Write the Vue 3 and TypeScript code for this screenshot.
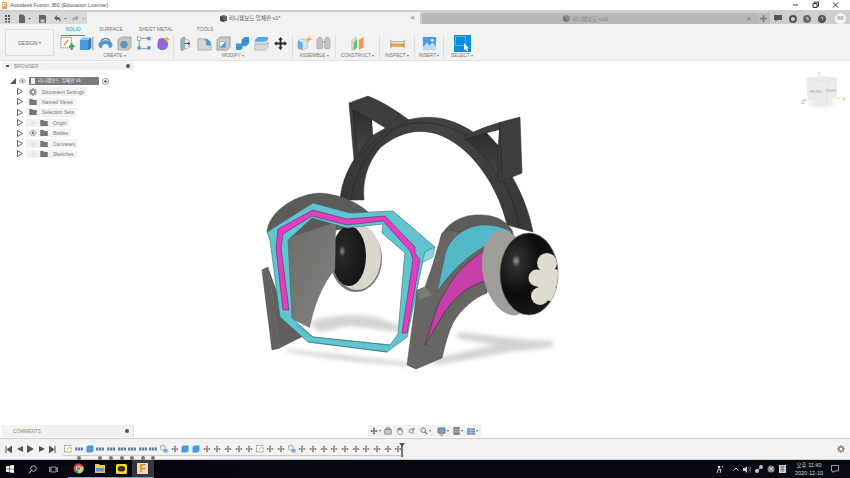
<script setup lang="ts">
const createIcons = ['sketch', 'box', 'revolve', 'hole', 'constraint', 'form']
const modifyIcons = ['press', 'fillet', 'shell', 'combine', 'split', 'move']
const rows = [
  { label: 'Document Settings', icon: 'gear', eye: '' },
  { label: 'Named Views', icon: 'folder', eye: '' },
  { label: 'Selection Sets', icon: 'folder', eye: '' },
  { label: 'Origin', icon: 'folder', eye: 'off' },
  { label: 'Bodies', icon: 'folder', eye: 'on' },
  { label: 'Canvases', icon: 'folder', eye: 'off' },
  { label: 'Sketches', icon: 'folder', eye: 'off' },
]
const kinds = 'sdbddddddlmbbmmmmmsmmlmmmmmmmmmm'.split('')
</script>

<template>
  <div class="app">
    <svg class="defs" width="0" height="0" aria-hidden="true">
      <defs>
        <symbol id="i-move" viewBox="0 0 16 16">
          <path d="M8 1 10.500 4H9v3h3V5.500L15 8l-3 2.500V9H9v3h1.500L8 15l-2.500-3H7V9H4v1.500L1 8l3-2.500V7h3V4H5.500z" fill="#2b2b2b" />
        </symbol>
        <symbol id="i-eye" viewBox="0 0 10 8">
          <path d="M.5 4C2 1.500 3.500 1 5 1s3 .5 4.500 3C8 6.500 6.500 7 5 7S2 6.500.5 4z" fill="none" stroke="currentColor" />
          <circle cx="5" cy="4" r="1.600" fill="currentColor" />
        </symbol>
        <symbol id="i-folder" viewBox="0 0 10 8">
          <path d="M0 0h4l1 1.200h5V8H0z" fill="#777" />
        </symbol>
        <symbol id="i-gear" viewBox="0 0 10 10">
          <circle cx="5" cy="5" r="2.700" fill="none" stroke="#777" stroke-width="1.600" />
          <path d="M5 0v2M5 8v2M0 5h2M8 5h2M1.500 1.500 3 3M7 7l1.500 1.500M8.500 1.500 7 3M3 7 1.500 8.500" stroke="#777" stroke-width="1.200" />
        </symbol>
      </defs>
    </svg>

    <header class="titlebar">
      <span class="f-logo">F</span>
      <span class="title-text">Autodesk Fusion 360 (Education License)</span>
      <div class="win-controls">
        <svg width="50" height="10" viewBox="0 0 50 10">
          <path d="M0 5h5" stroke="#333" />
          <path d="M20 3.500h4v4h-4zM21.500 3.500V2h4v4H24" fill="none" stroke="#333" />
          <path d="M40 2.500l5 5M45 2.500l-5 5" stroke="#333" />
        </svg>
      </div>
    </header>

    <div class="tabbar">
      <div class="quick">
        <svg width="84" height="11" viewBox="0 0 84 11">
          <path d="M4 2h2v2H4zM7 2h2v2H7zM4 5h2v2H4zM7 5h2v2H7zM4 8h2v1.500H4zM7 8h2v1.500H7z" fill="#555" />
          <path d="M18 1.500h4l2 2v6.500h-6z" fill="#666" />
          <path d="M27 5h3l-1.500 1.500z" fill="#666" />
          <path d="M38 2h6l1 1v7h-7z" fill="#666" />
          <rect x="39.500" y="6.500" width="4" height="3" fill="#ccc" />
          <path d="M53 5l3-3v2c3 0 4 2 3.500 5-1-2-2-2.500-3.500-2.500V8z" fill="#666" />
          <path d="M63 5h3l-1.500 1.500z" fill="#666" />
          <path d="M78 5l-3-3v2c-3 0-4 2-3.500 5 1-2 2-2.500 3.500-2.500V8z" fill="#aaa" />
          <path d="M81 5h3l-1.500 1.500z" fill="#aaa" />
        </svg>
      </div>
      <div class="tab active">
        <span class="tab-center">
          <svg class="doc-cube" width="7" height="7" viewBox="0 0 8 8"><path d="M4 0l4 1.500v5L4 8 0 6.500v-5z" fill="#666" /><path d="M4 3v5L0 6.500v-5z" fill="#444" /></svg>
          <span class="tab-label">리니잼보드 입체판 v1*</span>
        </span>
        <span class="tab-x">×</span>
      </div>
      <div class="tab inactive">
        <svg class="doc-cube" width="7" height="7" viewBox="0 0 8 8"><path d="M4 0l4 1.500v5L4 8 0 6.500v-5z" fill="#8a8a8a" /><path d="M4 3v5L0 6.500v-5z" fill="#777" /></svg>
        <span class="tab-label dim">리니잼보드 v10</span>
        <span class="tab-x right">×</span>
      </div>
      <div class="plus">
        <svg width="7" height="7" viewBox="0 0 7 7"><path d="M3.500 0v7M0 3.500h7" stroke="#777" stroke-width="1.400" /></svg>
      </div>
      <div class="tab-tools">
        <svg width="8" height="7" viewBox="0 0 8 7"><path d="M0 0h8v5H3L1.500 7V5H0z" fill="#555" /></svg>
        <svg width="8" height="8" viewBox="0 0 8 8"><circle cx="4" cy="4" r="3" fill="none" stroke="#555" stroke-width="2" /><path d="M4 0l3 1-2 2z" fill="#555" /></svg>
        <svg width="8" height="8" viewBox="0 0 8 8"><circle cx="4" cy="4" r="4" fill="#666" /><path d="M4 2v2h2" stroke="#ddd" fill="none" /></svg>
        <svg width="8" height="8" viewBox="0 0 8 8"><circle cx="4" cy="4" r="4" fill="#555" /><path d="M3 3c0-1 2-1 2 0 0 1-1 1-1 2" stroke="#ddd" fill="none" stroke-width=".8" /></svg>
        <span class="avatar">KK</span>
      </div>
    </div>

    <section class="ribbon">
      <button class="design">DESIGN <i class="caret"></i></button>
      <div class="ribbon-main">
        <nav class="ribbon-tabs">
          <span class="rtab on">SOLID</span>
          <span class="rtab">SURFACE</span>
          <span class="rtab wide">SHEET METAL</span>
          <span class="rtab">TOOLS</span>
        </nav>
        <div class="groups">
          <div class="group g-create">
            <div class="icons">
              <svg v-for="n in createIcons" :key="n" class="ti" viewBox="0 0 16 16">
                <template v-if="n === 'sketch'">
                  <rect x="1" y="1.500" width="11" height="11" fill="#fff" stroke="#777" stroke-dasharray="1.500 .8" />
                  <path d="M4 10 9 4" stroke="#d98c3b" stroke-width="1.400" />
                  <path d="M9.500 11h6M12.500 8v7" stroke="#2aa84a" stroke-width="2.200" />
                </template>
                <template v-else-if="n === 'box'">
                  <path d="M1 4h9l3-2.500v11L10 15H1z" fill="#4a9ad8" />
                  <path d="M10 4l3-2.500v11L10 15z" fill="#2c77b5" />
                  <path d="M1 4l3-2.500h9L10 4z" fill="#8cc4ea" />
                  <path d="M14.800 1v14" stroke="#555" stroke-width=".7" />
                </template>
                <template v-else-if="n === 'revolve'">
                  <path d="M.5 9C1 3 15 3 15.500 9c0 3-3 4-3.500 4l-.8-3C9 8 7 8 5 10l-1 3c-1.500 0-3.500-1-3.500-4z" fill="#4a9ad8" />
                  <path d="M3 5c3-3 7-3 10 0" fill="none" stroke="#666" stroke-width="1.200" />
                </template>
                <template v-else-if="n === 'hole'">
                  <path d="M1 4l4-3h10v11l-3 3H1z" fill="#c6c6c6" stroke="#888" stroke-width=".6" />
                  <circle cx="7.500" cy="9" r="3.600" fill="#4a9ad8" stroke="#777" stroke-width=".6" />
                </template>
                <template v-else-if="n === 'constraint'">
                  <path d="M3.500 4v8M5 2.500h7M5 13.500h7" stroke="#888" stroke-width=".9" />
                  <rect x="1.500" y="1" width="3.500" height="3.500" fill="#fff" stroke="#777" stroke-width=".6" />
                  <rect x="12" y="1" width="3.500" height="3.500" fill="#4a9ad8" />
                  <rect x="1.500" y="11" width="3.500" height="3.500" fill="#4a9ad8" />
                  <rect x="12" y="11" width="3.500" height="3.500" fill="#4a9ad8" />
                </template>
                <template v-else>
                  <path d="M3 6c0-3 2-4 5-4 4 0 6 3 6 7 0 4-3 6-6 6-3 0-6-2-5.500-5z" fill="#8d6bd6" />
                  <path d="M12.500 0l1 2.500 2.500 1-2.500 1-1 2.500-1-2.500L9 3.500l2.500-1z" fill="#f3a832" />
                </template>
              </svg>
            </div>
            <div class="glabel">CREATE <i class="caret"></i></div>
          </div>

          <div class="group g-modify">
            <div class="icons">
              <svg v-for="n in modifyIcons" :key="n" class="ti" viewBox="0 0 16 16">
                <template v-if="n === 'press'">
                  <path d="M3 3l3-2h1v13l-3 2-1-2z" fill="#8cb8d8" stroke="#777" stroke-width=".5" />
                  <path d="M7 3l5 1.500v8L7 14z" fill="#eee" stroke="#888" stroke-width=".5" />
                  <path d="M7 8h5M10.500 6.500 12.500 8l-2 1.500" stroke="#333" stroke-width=".9" fill="none" />
                </template>
                <template v-else-if="n === 'fillet'">
                  <path d="M1 3h7c4 0 7 3 7 7v5H1z" fill="#d8d8d8" stroke="#888" stroke-width=".6" />
                  <path d="M8 3c4 0 7 3 7 7h-5C10 7 9.500 5 8 3z" fill="#4a9ad8" />
                </template>
                <template v-else-if="n === 'shell'">
                  <path d="M1 4l3-3h11v11l-3 3H1z" fill="#c8c8c8" stroke="#777" stroke-width=".6" />
                  <path d="M4 6h6v6H4z" fill="#fff" stroke="#777" stroke-width=".5" />
                  <path d="M4 12l6-6v6z" fill="#4a9ad8" />
                </template>
                <template v-else-if="n === 'combine'">
                  <path d="M1 8h6V4l3-3h5v7l-3 3H8v2l-2 2H1z" fill="#3d93d8" />
                  <path d="M7 8l3-3h5" fill="none" stroke="#2a70ad" stroke-width=".7" />
                </template>
                <template v-else-if="n === 'split'">
                  <path d="M1 4l3-3h11v3l-3 2H1z" fill="#5aa8e0" />
                  <path d="M0 7.500h16" stroke="#9bd0ee" stroke-width="1.200" />
                  <path d="M1 9h11l3-2v5l-3 3H1z" fill="#ddd" stroke="#888" stroke-width=".5" />
                </template>
                <use v-else href="#i-move" />
              </svg>
            </div>
            <div class="glabel">MODIFY <i class="caret"></i></div>
          </div>

          <div class="group g-assemble">
            <div class="icons">
              <svg class="ti" viewBox="0 0 16 16">
                <path d="M1 5l5-2 5 2v8l-5 2-5-2z" fill="#d8e5f0" stroke="#8aa" stroke-width=".5" />
                <path d="M1 5l5 2v8l-5-2z" fill="#6aaae0" />
                <path d="M12.500 0l1 2.500 2.500 1-2.500 1-1 2.500-1-2.500L9 3.500l2.500-1z" fill="#f3a832" />
              </svg>
              <svg class="ti" viewBox="0 0 16 16">
                <path d="M1 13V6c0-3 1.500-5 3-5s3 2 3 5v7c-1 1-5 1-6 0zM9 13V6c0-3 1.500-5 3-5s3 2 3 5v7c-1 1-5 1-6 0z" fill="#c4c4c4" stroke="#999" stroke-width=".6" />
                <path d="M7 6h2" stroke="#888" />
              </svg>
            </div>
            <div class="glabel">ASSEMBLE <i class="caret"></i></div>
          </div>

          <div class="group g-construct">
            <div class="icons">
              <svg class="ti" viewBox="0 0 16 16">
                <path d="M2 5l4-4v11l-4 3z" fill="#e3e3e3" stroke="#999" stroke-width=".5" />
                <path d="M4 7l3.500-4v9.500L4 15.500z" fill="#6cc070" />
                <path d="M9.500 4l5-3v11l-5 3z" fill="#e89a52" />
              </svg>
            </div>
            <div class="glabel">CONSTRUCT <i class="caret"></i></div>
          </div>

          <div class="group g-inspect">
            <div class="icons">
              <svg class="ti" viewBox="0 0 16 16">
                <path d="M2 6h12" stroke="#888" stroke-dasharray="1 .5" />
                <rect x="1" y="8" width="14" height="3.500" fill="#eda13a" />
                <path d="M1 4v9M15 4v9" stroke="#777" stroke-width=".8" />
              </svg>
            </div>
            <div class="glabel">INSPECT <i class="caret"></i></div>
          </div>

          <div class="group g-insert">
            <div class="icons">
              <svg class="ti" viewBox="0 0 16 16">
                <rect x="1" y="1" width="14" height="14" fill="#4f9be0" />
                <path d="M1 12l4-5 3 3 3-3 4 4v4H1z" fill="#b9dcf4" />
                <circle cx="11" cy="4.500" r="1.400" fill="#fff" />
              </svg>
            </div>
            <div class="glabel">INSERT <i class="caret"></i></div>
          </div>

          <div class="group g-select">
            <div class="icons">
              <svg class="ti big" viewBox="0 0 17 17">
                <rect width="17" height="17" fill="#0a8fd8" />
                <rect x="1.500" y="1.500" width="10" height="9" fill="none" stroke="#bfe3f7" stroke-width=".7" stroke-dasharray="1.200 .8" />
                <path d="M10 8v7.500l1.800-1.600 1.300 2.600 1.200-.6-1.300-2.500H15z" fill="#fff" />
              </svg>
            </div>
            <div class="glabel">SELECT <i class="caret"></i></div>
          </div>
        </div>
      </div>
    </section>

    <main class="canvas">
      <svg class="model" width="850" height="377" viewBox="0 61 850 377">
        <defs>
          <filter id="soft" x="-20%" y="-50%" width="140%" height="200%"><feGaussianBlur stdDeviation="2" /></filter>
          <radialGradient id="dome" cx="0.28" cy="0.34" r="0.75">
            <stop offset="0" stop-color="#9a9a9a" />
            <stop offset="0.1" stop-color="#2e2e2e" />
            <stop offset="0.55" stop-color="#0c0c0c" />
            <stop offset="1" stop-color="#1a1a1a" />
          </radialGradient>
          <radialGradient id="inner" cx="0.3" cy="0.42" r="0.7">
            <stop offset="0" stop-color="#888" />
            <stop offset="0.14" stop-color="#262626" />
            <stop offset="1" stop-color="#141414" />
          </radialGradient>
          <linearGradient id="panel" x1="0" y1="0" x2="1" y2="1">
            <stop offset="0" stop-color="#6c6a67" />
            <stop offset="1" stop-color="#85837f" />
          </linearGradient>
          <linearGradient id="band" x1="0" y1="0" x2="1" y2="0">
            <stop offset="0" stop-color="#363634" />
            <stop offset="0.5" stop-color="#454442" />
            <stop offset="1" stop-color="#383836" />
          </linearGradient>
          <linearGradient id="recess" x1="0" y1="0" x2="0" y2="1">
            <stop offset="0" stop-color="#2c2c2b" />
            <stop offset="1" stop-color="#484846" />
          </linearGradient>
          <clipPath id="domeClip"><ellipse cx="529" cy="274" rx="29" ry="41" /></clipPath>
        </defs>

        <!-- ground shadows -->
        <g fill="#cfcfcf" filter="url(#soft)" opacity="0.9">
          <path d="M310 322 C325 315 365 313 378 318 L402 326 L400 332 L350 326 L318 332z" />
          <path d="M287 349 L407 362 L407 366 L340 360 L287 352z" />
          <path d="M460 332 L520 339 L553 341 L553 347 L510 352 L437 365 L432 359 L495 345 L456 338z" />
        </g>

        <!-- headband -->
        <path d="M340 200C343 165 370 128 408 120C430 114 450 118 470 130C500 150 525 190 533 232L507 225C498 185 470 145 437 134C415 127 395 135 380 148C368 162 362 180 364 200Z" fill="url(#band)" stroke="#2a2a2a" stroke-width=".5" />
        <path d="M351 200C355 170 372 142 398 127C420 119 445 122 468 137C492 155 512 188 519 226" fill="none" stroke="#252525" stroke-width=".7" />
        <!-- left ear -->
        <path d="M349 103L368 96C385 103 398 112 409 120L385 132L362 152L354 160Z" fill="#3e3d3b" stroke="#2a2a2a" stroke-width=".5" />
        <path d="M353 110L372 120L373 135L357 155Z" fill="url(#recess)" stroke="#1f1f1f" stroke-width=".6" />
        <path d="M372 120L385 128L373 135Z" fill="#fff" />
        <!-- right ear -->
        <path d="M463 137C480 128 500 122 520 117L522 173L500 182C495 165 480 148 463 137Z" fill="#403f3d" stroke="#2a2a2a" stroke-width=".5" />
        <path d="M500 122L502 178" stroke="#222" stroke-width=".7" />
        <path d="M465 139L487 133L498 145L498 178C492 165 480 150 465 139Z" fill="url(#recess)" stroke="#1f1f1f" stroke-width=".5" />
        <path d="M487 133L499 130L498 145Z" fill="#fff" />

        <!-- left cup -->
        <path d="M267 232C268 215 290 195 320 193C345 195 362 205 372 216L360 225L290 240Z" fill="#5c5b58" stroke="#444" stroke-width=".5" />
        <ellipse cx="356" cy="259" rx="26" ry="33" fill="#777" />
        <ellipse cx="357" cy="257" rx="24" ry="33" fill="#d9d6cc" />
        <ellipse cx="349" cy="256" rx="17" ry="30" fill="url(#inner)" />
        <path d="M283 240L336 222L335 270C324 282 314 305 310 328L290 318Z" fill="url(#panel)" />
        <path d="M262 270L268 267L280 348L272 350Z" fill="#646360" stroke="#444" stroke-width=".5" />
        <path d="M268 267L280 348L304 336L280 300Z" fill="#605f5c" />

        <!-- left frame -->
        <path fill-rule="evenodd" d="M267 232L313 203L350 213L393 211L435 247L425 252L421 270L407 337L387 352L308 342L280 317L270 240ZM288 240L292 318L313 337L390 345L398 334L404 262L405 253L382 233L383 224L347 228L312 218Z" fill="#62c4cf" stroke="#2e6f79" stroke-width=".6" />
        <path d="M425 252L435 247L433 257L422 263Z" fill="#8ad6dc" stroke="#2e6f79" stroke-width=".4" />
        <path d="M278 229L313 210L347 219L385 216L415 247L415 253L420 260L407 333L402 333L413 259L410 251L383 221L347 225L312 216L283 234L281 248L289 310L283 310L276 248Z" fill="#e63cc4" stroke="#333" stroke-width=".5" />
        <path d="M296 325L313 337L390 345M308 342L387 352" fill="none" stroke="#2e6f79" stroke-width=".5" />

        <!-- right assembly -->
        <path d="M440 240C445 222 465 214 480 215C495 215 505 220 512 230L515 240L470 250Z" fill="#5d5c59" stroke="#444" stroke-width=".5" />
        <path d="M407 365L416 369L442 358C445 345 448 333 453 323C460 310 475 297 487 293L489 280L502 238L507 230L460 232L450 230L442 233L432 267L425 287L417 290Z" fill="#686662" stroke="#444" stroke-width=".5" />
        <path d="M417 290L425 287L432 295L419 300Z" fill="#7c7a77" />
        <path d="M437 292L445 255C448 240 462 228 480 225C492 224 505 228 512 232L505 238C480 245 455 265 437 292Z" fill="#55b8c8" stroke="#444" stroke-width=".5" />
        <path d="M425 345L437 307C445 290 455 275 463 267C478 254 490 245 502 238L488 280C478 283 470 287 463 292C452 302 445 310 440 320Z" fill="#c63fa8" stroke="#3f3f3f" stroke-width=".8" />
        <ellipse cx="508" cy="273" rx="25" ry="43" fill="#a09e98" transform="rotate(-12 508 273)" />
        <ellipse cx="529" cy="274" rx="29" ry="41" fill="url(#dome)" stroke="#666" stroke-width=".6" />
        <g clip-path="url(#domeClip)" fill="#dedbd0">
          <circle cx="547" cy="263" r="10" />
          <circle cx="554" cy="278" r="9" />
          <circle cx="550" cy="293" r="8" />
          <circle cx="540" cy="296" r="9" />
          <circle cx="537" cy="278" r="8.500" />
          <circle cx="545" cy="280" r="10" />
        </g>

        <!-- view cube -->
        <g>
          <path d="M819 78v5" stroke="#a9e8a9" />
          <text x="819" y="76" class="axis" fill="#8fdc8f" text-anchor="middle">Y</text>
          <path d="M836 98h5" stroke="#f3d0a0" />
          <text x="842" y="101" class="axis" fill="#f2b878">X</text>
          <path d="M804 100h3" stroke="#b6ace9" />
          <text x="801" y="104" class="axis" fill="#a69be6">Z</text>
          <ellipse cx="822" cy="104" rx="14" ry="2.500" fill="#e2e2e2" filter="url(#soft)" />
          <path d="M806 78L822 76L837 78L837 96L827 105L808 100Z" fill="#ececec" />
          <path d="M806 78L827 82L837 78M827 82V105" fill="none" stroke="#d8d8d8" stroke-width=".5" />
          <text x="816" y="93" class="cube" fill="#999" text-anchor="middle">FRONT</text>
          <text x="831" y="92" class="cube" fill="#aaa" text-anchor="middle">RIGHT</text>
        </g>
      </svg>

      <aside class="browser">
        <div class="panel-head">
          <i class="pin"></i><span>BROWSER</span><i class="dot"></i>
        </div>
        <div class="tree">
          <div class="root-row">
            <svg class="tri-root" width="6" height="6" viewBox="0 0 6 6"><path d="M6 0v6H0z" fill="#555" /></svg>
            <svg class="eye" width="7" height="6" color="#666"><use href="#i-eye" /></svg>
            <span class="root-label"><i class="doc"></i>리니잼보드 입체판 v1</span>
            <svg width="7" height="7" viewBox="0 0 7 7"><circle cx="3.500" cy="3.500" r="3" fill="#fff" stroke="#666" stroke-width=".7" /><circle cx="3.500" cy="3.500" r="1.300" fill="#555" /></svg>
          </div>
          <div v-for="r in rows" :key="r.label" class="row">
            <svg class="tri" width="6" height="7" viewBox="0 0 6 7"><path d="M.5.500 5.500 3.500.5 6.500z" fill="#fff" stroke="#555" stroke-width=".9" /></svg>
            <span class="row-body">
              <svg v-if="r.eye" class="eye" :class="{ faint: r.eye === 'off' }" width="8" height="6"><use href="#i-eye" /></svg>
              <svg v-if="r.icon === 'gear'" width="8" height="8"><use href="#i-gear" /></svg>
              <svg v-else width="8" height="6"><use href="#i-folder" /></svg>
              <span class="row-text">{{ r.label }}</span>
            </span>
          </div>
        </div>
      </aside>

      <div class="bottom-strip">
        <div class="comments">
          <span>COMMENTS</span><i class="dot"></i>
        </div>
        <div class="navbar">
          <svg width="8" height="8" viewBox="0 0 16 16" opacity=".8"><use href="#i-move" /></svg>
          <i class="caret c-tight"></i>
          <svg class="n1" width="8" height="8" viewBox="0 0 10 10"><path d="M1 3h8v6H1zM3 3V1h4v2" fill="#ccc" stroke="#777" /></svg>
          <svg class="n2" width="8" height="8" viewBox="0 0 10 10"><path d="M2 5V3l1 1V1.500l1 0V4l.5-3 1 0V4l1-2.500 1 .5L7 5l1.500-1L8 8 6.500 9.500h-2L2 7z" fill="#eee" stroke="#666" stroke-width=".7" /></svg>
          <svg class="n2" width="8" height="8" viewBox="0 0 10 10"><circle cx="4" cy="5" r="2.500" fill="none" stroke="#777" /><path d="M6 7l2 2M7 1v3M5.500 2.500h3" stroke="#777" /></svg>
          <svg class="n2" width="8" height="8" viewBox="0 0 10 10"><circle cx="4" cy="4" r="3" fill="#dce8f2" stroke="#777" /><path d="M6 6l3 3" stroke="#666" stroke-width="1.300" /></svg>
          <i class="caret c-tight"></i>
          <svg class="n3" width="9" height="9" viewBox="0 0 10 10"><rect x="1" y="1" width="8" height="6" rx="1" fill="#7d9dc0" stroke="#777" /><path d="M3 9h4" stroke="#777" /></svg>
          <i class="caret c-tight"></i>
          <svg class="n2" width="7" height="8" viewBox="0 0 8 10"><rect width="8" height="10" fill="#888" /><path d="M0 3h8M0 6h8" stroke="#bbb" /></svg>
          <i class="caret c-tight"></i>
          <svg class="n2" width="8" height="7" viewBox="0 0 10 8"><rect width="10" height="8" fill="#6c90c0" /><path d="M0 2.500h10M5 0v8M0 5.500h10" stroke="#dbe6f3" stroke-width=".6" /></svg>
          <i class="caret c-tight"></i>
        </div>
      </div>
    </main>

    <footer class="timeline">
      <div class="controls">
        <svg width="7" height="7" viewBox="0 0 7 7"><path d="M1 0v7M7 0v7L2 3.500z" stroke="#555" fill="#555" /></svg>
        <svg width="6" height="6" viewBox="0 0 6 6"><path d="M6 0v6L0 3z" fill="#555" /></svg>
        <svg width="7" height="8" viewBox="0 0 7 8"><path d="M0 0l7 4-7 4z" fill="#555" /></svg>
        <svg width="6" height="6" viewBox="0 0 6 6"><path d="M0 0v6l6-3z" fill="#555" /></svg>
        <svg width="7" height="7" viewBox="0 0 7 7"><path d="M6 0v7M0 0v7l5-3.500z" stroke="#555" fill="#555" /></svg>
      </div>
      <div class="tracks">
        <div v-for="(k, i) in kinds" :key="i" class="step">
          <svg width="8" height="8" viewBox="0 0 16 16">
            <g v-if="k === 's'">
              <rect x="1" y="1" width="13" height="13" fill="#fff" stroke="#777" stroke-width="1.500" stroke-dasharray="2 1" />
              <path d="M4 11 11 4" stroke="#e39a3d" stroke-width="2" />
            </g>
            <path v-else-if="k === 'b'" d="M1 4l3-3h11v11l-3 3H1z" fill="#4a9ad8" />
            <g v-else-if="k === 'd'" fill="#5a7fa6">
              <rect x="0" y="5" width="4.500" height="6" /><rect x="5.700" y="5" width="4.500" height="6" /><rect x="11.500" y="5" width="4.500" height="6" />
            </g>
            <g v-else-if="k === 'l'">
              <rect x="1" y="1" width="9" height="9" rx="3" fill="none" stroke="#888" stroke-width="1.500" />
              <rect x="7" y="8" width="8" height="7" fill="#7ba7d0" />
            </g>
            <use v-else href="#i-move" opacity=".65" />
          </svg>
          <i v-if="k === 'd'" class="badge"></i>
        </div>
        <div class="ruler"></div>
        <div class="marker"></div>
      </div>
      <svg class="tl-gear" width="8" height="8" color="#777"><use href="#i-gear" /></svg>
    </footer>

    <footer class="taskbar">
      <div class="task-left">
        <svg width="8" height="8" viewBox="0 0 8 8"><path d="M0 1.200 3.500.7v3H0zM4 .6 8 0v3.700H4zM0 4.200h3.500v3L0 6.800zM4 4.200h4V8l-4-.6z" fill="#fff" /></svg>
        <svg class="t-search" width="9" height="9" viewBox="0 0 9 9"><circle cx="5.500" cy="3.500" r="2.800" fill="none" stroke="#ddd" stroke-width=".8" /><path d="M3.500 5.500.7 8.500" stroke="#ddd" /></svg>
        <svg class="t-view" width="9" height="7" viewBox="0 0 9 7"><path d="M2 1h5v5H2zM0 1.500h1v4H0zM8 1.500h1v4H8z" fill="none" stroke="#ccc" stroke-width=".7" /></svg>
        <span class="app-i u">
          <svg width="11" height="11" viewBox="0 0 12 12">
            <circle cx="6" cy="6" r="5.500" fill="#d9463a" />
            <path d="M6 6 1.200 8.800A5.500 5.500 0 0 0 6 11.500z" fill="#2f9e4f" />
            <path d="M6 6 6 11.500A5.500 5.500 0 0 0 10.800 3.200z" fill="#f2c230" />
            <circle cx="6" cy="6" r="2.500" fill="#4a8fe8" stroke="#fff" stroke-width=".7" />
          </svg>
        </span>
        <span class="app-i u">
          <svg width="10" height="9" viewBox="0 0 10 9"><path d="M0 0h4l1 1h5v8H0z" fill="#f2c25a" /><rect x="1" y="4" width="8" height="3.500" fill="#4a9ad8" /></svg>
        </span>
        <span class="app-i u">
          <svg width="11" height="10" viewBox="0 0 11 10"><rect width="11" height="10" rx="1.500" fill="#f5dc1e" /><ellipse cx="5.500" cy="4.800" rx="3.800" ry="2.800" fill="#3a2c20" /></svg>
        </span>
        <span class="app-i active-app">
          <span class="fbox">F</span>
        </span>
      </div>
      <div class="tray">
        <svg width="8" height="8" viewBox="0 0 8 8"><circle cx="3" cy="2" r="1.300" fill="#ddd" /><path d="M1 8 2.500 4 5 4.500 4 8M6 1l1 1.500" stroke="#ddd" fill="none" /></svg>
        <svg class="tr-up" width="6" height="4" viewBox="0 0 6 4"><path d="M.5 3.500 3 1l2.500 2.500" stroke="#ddd" fill="none" /></svg>
        <svg width="8" height="7" viewBox="0 0 8 7"><path d="M0 2h2l2-2v7L2 5H0z" fill="#ccc" /><path d="M5.500 1.500c1 1 1 3 0 4M7 .5c1.500 1.500 1.500 4.500 0 6" stroke="#ccc" stroke-width=".6" fill="none" /></svg>
        <svg width="8" height="8" viewBox="0 0 8 8"><circle cx="2" cy="6" r="2" fill="#ccc" /><circle cx="6" cy="2" r="2" fill="#bbb" /><path d="M2 6l4-4" stroke="#ccc" /></svg>
        <svg width="8" height="8" viewBox="0 0 8 8"><circle cx="4" cy="4" r="3.500" fill="#888" /><path d="M2.500 2.500l3 3M5.500 2.500l-3 3" stroke="#eee" stroke-width=".7" /></svg>
        <svg width="7" height="8" viewBox="0 0 7 8"><rect width="7" height="8" fill="#ddd" /><path d="M2 1h3v2H2zM1.500 4.500h4M1.500 6h4" stroke="#333" stroke-width=".6" fill="none" /></svg>
        <div class="clock"><span>오후 11:40</span><span>2020-12-10</span></div>
        <svg width="8" height="8" viewBox="0 0 8 8"><path d="M.5.500h7v5.500H3.500L2 7.500V6H.5z" fill="none" stroke="#ddd" stroke-width=".7" /></svg>
      </div>
    </footer>
  </div>
</template>

<style scoped>
.app {
  width: 850px;
  height: 478px;
  display: flex;
  flex-direction: column;
  overflow: hidden;
  background: #fff;
  font-family: "Liberation Sans", "Noto Sans CJK KR", sans-serif;
  color: #777;
  font-size: 5px;
}
.defs { position: absolute; }
svg { display: block; flex: none; }
i { display: block; font-style: normal; }
.caret {
  width: 0;
  height: 0;
  border-left: 1.500px solid transparent;
  border-right: 1.500px solid transparent;
  border-top: 2px solid currentColor;
  display: inline-block;
  vertical-align: middle;
}

/* title bar */
.titlebar {
  height: 10px;
  flex: none;
  display: flex;
  align-items: center;
  padding-left: 2px;
  background: #fff;
}
.f-logo {
  width: 5px;
  height: 7px;
  background: #f0a050;
  color: #fff;
  font-size: 6px;
  font-weight: 700;
  line-height: 7px;
  text-align: center;
}
.title-text { margin-left: 3px; font-size: 5.300px; color: #555; }
.win-controls { margin-left: auto; padding-right: 7px; }

/* document tabs */
.tabbar {
  height: 14px;
  flex: none;
  display: flex;
  background: #cfcfcf;
}
.quick {
  width: 87px;
  flex: none;
  display: flex;
  align-items: center;
  background: #d9d9d9;
  padding-left: 1px;
  box-sizing: border-box;
  border-top: 2px solid #cfcfcf;
}
.tab {
  margin-top: 3px;
  height: 11px;
  display: flex;
  align-items: center;
  flex: none;
  box-sizing: border-box;
}
.tab.active { width: 333px; background: #f2f2f2; margin-top: 2px; height: 12px; }
.tab-center { display: flex; align-items: center; gap: 2px; margin-left: 133px; }
.tab.inactive { width: 335px; margin-left: 2px; background: #b8b8b8; padding-left: 141px; gap: 2px; }
.tab-label { font-size: 5.500px; color: #555; }
.tab-label.dim { color: #7d7d7d; }
.tab-x { margin-left: auto; padding-right: 5px; font-size: 8px; line-height: 8px; color: #777; }
.inactive .tab-x { padding-right: 6px; }
.plus {
  width: 13px;
  flex: none;
  margin-top: 3px;
  height: 11px;
  background: #bdbdbd;
  display: flex;
  align-items: center;
  justify-content: center;
}
.tab-tools {
  flex: 1;
  display: flex;
  align-items: center;
  padding: 3px 0 0 4px;
  gap: 6.500px;
}
.avatar {
  width: 11px;
  height: 11px;
  margin-left: 3px;
  border-radius: 50%;
  background: #f4f4f4;
  color: #666;
  font-size: 4.500px;
  line-height: 11px;
  text-align: center;
}

/* ribbon */
.ribbon {
  height: 37px;
  flex: none;
  display: flex;
  background: #f2f2f2;
  border-bottom: 1px solid #e2e2e2;
  box-sizing: border-box;
  padding-left: 5px;
}
.design {
  width: 49px;
  height: 27px;
  margin-top: 5px;
  padding: 0;
  border: 1px solid #dcdcdc;
  border-radius: 1px;
  background: #f5f5f5;
  color: #666;
  font: 5px "Liberation Sans", sans-serif;
}
.ribbon-main { flex: 1; display: flex; flex-direction: column; }
.ribbon-tabs {
  height: 11px;
  display: flex;
  padding: 2px 0 0 7px;
  box-sizing: border-box;
}
.rtab {
  flex: none;
  width: 24px;
  height: 9px;
  margin-right: 14px;
  text-align: center;
  line-height: 7px;
  font-size: 5px;
  color: #777;
  white-space: nowrap;
}
.rtab.on { color: #2b8fd0; border-bottom: 1px solid #2b8fd0; }
.rtab.wide { width: 38px; margin-right: 18px; }
.groups { display: flex; flex: 1; }
.group {
  display: flex;
  flex-direction: column;
  align-items: center;
  border-right: 1px solid #dedede;
  height: 24px;
  box-sizing: border-box;
}
.icons { display: flex; gap: 4px; height: 17px; align-items: center; }
.ti { width: 15px; height: 15px; }
.ti.big { width: 17px; height: 17px; }
.glabel { font-size: 4.800px; line-height: 6px; margin-top: 1px; color: #777; white-space: nowrap; }
.g-create { width: 120px; padding-left: 2px; }
.g-modify { width: 119px; }
.g-assemble { width: 43px; }
.g-construct { width: 44px; }
.g-inspect { width: 35px; }
.g-insert { width: 29px; }
.g-select { width: 36px; border-right: 0; }

/* canvas */
.canvas { flex: 1; position: relative; min-height: 0; background: #fff; }
.model { position: absolute; left: 0; top: 0; }
.axis { font: 6px "Liberation Sans", sans-serif; }
.cube { font: 3.500px "Liberation Sans", sans-serif; }

.browser {
  position: absolute;
  left: 2px;
  top: 1px;
  width: 132px;
}
.panel-head {
  height: 8px;
  background: #f2f2f2;
  border-radius: 1px;
  display: flex;
  align-items: center;
  padding: 0 4px;
  font-size: 4.800px;
  color: #888;
}
.pin { width: 3px; height: 1.500px; background: #555; margin-right: 5px; }
.dot { width: 4px; height: 4px; border-radius: 50%; background: #555; margin-left: auto; }
.tree { padding-top: 6px; display: flex; flex-direction: column; }
.root-row {
  height: 10.400px;
  display: flex;
  align-items: center;
  gap: 3px;
  padding-left: 8px;
}
.root-label {
  width: 70px;
  height: 8px;
  background: #7a7a7a;
  color: #fff;
  font-size: 4.800px;
  line-height: 8px;
  display: flex;
  gap: 3px;
  align-items: center;
  padding-left: 2px;
  box-sizing: border-box;
  border-radius: 1px;
}
.doc { width: 4px; height: 6px; background: #eee; }
.row {
  height: 10.400px;
  display: flex;
  align-items: center;
  padding-left: 15px;
}
.tri { margin-right: 3px; }
.row-body {
  height: 8.500px;
  background: #f3f3f3;
  display: flex;
  align-items: center;
  gap: 3px;
  padding: 0 3px;
}
.row-text { font-size: 5px; color: #777; margin-left: 2px; white-space: nowrap; }
.eye { color: #777; }
.eye.faint { color: #ddd; }

.bottom-strip {
  position: absolute;
  left: 0;
  right: 0;
  bottom: 1px;
  display: flex;
  align-items: center;
}
.comments {
  margin-left: 2px;
  width: 132px;
  height: 12px;
  box-sizing: border-box;
  background: #f2f2f2;
  display: flex;
  align-items: center;
  padding: 0 4px 0 11px;
  font-size: 4.800px;
  color: #888;
  border-right: 1px solid #ddd;
}
.navbar {
  margin-left: 234px;
  width: 114px;
  height: 12px;
  box-sizing: border-box;
  background: #f2f2f2;
  display: flex;
  align-items: center;
  padding-left: 2px;
  color: #666;
}
.c-tight { margin-left: 1px; }
.n1 { margin-left: 3px; }
.n2 { margin-left: 4px; }
.n3 { margin-left: 6px; }

/* timeline */
.timeline {
  height: 22px;
  flex: none;
  display: flex;
  align-items: center;
  box-sizing: border-box;
  background: #f2f2f2;
  border-top: 1px solid #d0d0d0;
  border-bottom: 1px solid #ccc;
}
.controls {
  width: 63px;
  flex: none;
  display: flex;
  align-items: center;
  gap: 4.500px;
  padding-left: 5px;
  box-sizing: border-box;
}
.tracks {
  position: relative;
  display: flex;
  height: 20px;
  align-items: center;
  padding-bottom: 1px;
  box-sizing: border-box;
}
.step {
  width: 10.650px;
  display: flex;
  justify-content: center;
  position: relative;
}
.badge {
  position: absolute;
  left: 3.300px;
  top: 11px;
  width: 4px;
  height: 4px;
  border-radius: 50%;
  background: #777;
}
.ruler {
  position: absolute;
  left: 0;
  right: 0;
  bottom: 3.500px;
  height: 1px;
  background: #ccc;
}
.marker {
  position: absolute;
  right: 1px;
  top: 4px;
  width: 2px;
  height: 14px;
  background: #777;
}
.marker::before {
  content: "";
  position: absolute;
  left: -2px;
  top: 0;
  border-left: 3px solid transparent;
  border-right: 3px solid transparent;
  border-top: 4px solid #555;
}
.tl-gear { margin-left: auto; margin-right: 5px; }

/* taskbar */
.taskbar {
  height: 18px;
  flex: none;
  display: flex;
  align-items: center;
  background: linear-gradient(90deg, #04070d, #060b14);
}
.task-left { display: flex; align-items: center; height: 100%; padding-left: 6px; }
.t-search { margin-left: 14px; }
.t-view { margin-left: 12px; }
.app-i {
  width: 21.500px;
  height: 100%;
  display: flex;
  align-items: center;
  justify-content: center;
  box-sizing: border-box;
}
.app-i.u { border-bottom: 1px solid #6aa9d8; }
.app-i:first-of-type { margin-left: 9.500px; }
.active-app { background: #34383e; border-bottom: 1px solid #6aa9d8; }
.fbox {
  width: 11px;
  height: 11px;
  background: #f0d8c0;
  color: #e08030;
  font-size: 10px;
  font-weight: 700;
  line-height: 11px;
  text-align: center;
}
.tray {
  margin-left: auto;
  display: flex;
  align-items: center;
  padding-right: 11px;
  gap: 4px;
}
.tr-up { margin-left: 5px; }
.clock {
  width: 30px;
  margin: 0 3px 0 4px;
  display: flex;
  flex-direction: column;
  align-items: center;
  font-size: 5.500px;
  line-height: 8px;
  color: #d8d8d8;
  white-space: nowrap;
}
</style>
